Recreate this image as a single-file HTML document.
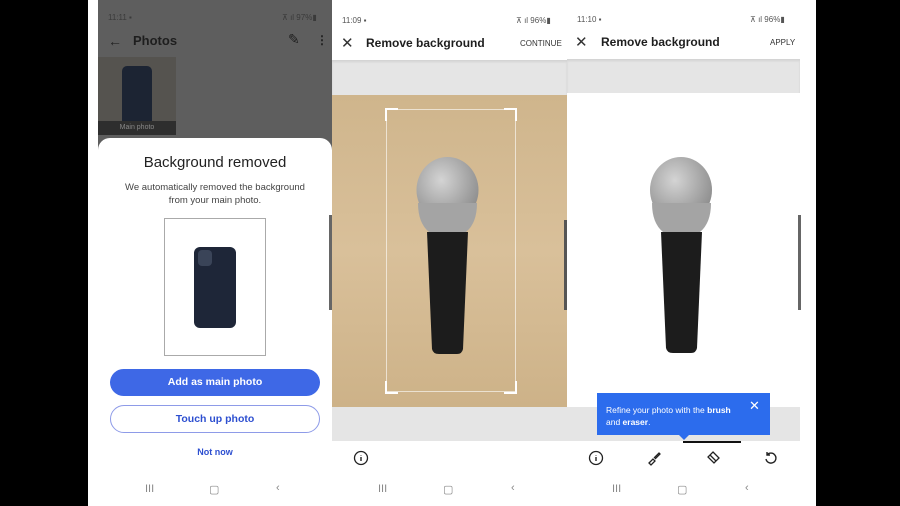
<!DOCTYPE html>
<html><head><meta charset="utf-8"><style>
*{margin:0;padding:0;box-sizing:border-box}
body{width:900px;height:506px;background:#000;position:relative;overflow:hidden;font-family:"Liberation Sans",sans-serif}
.a{position:absolute}
.st{font-size:8px;color:#555}
.nav{font-size:11px;color:#888}
</style></head><body>
<div class="a" style="left:88px;top:0;width:728px;height:506px;background:#fff"></div>

<!-- Panel 1 dimmed -->
<div class="a" style="left:98px;top:0;width:234px;height:150px;background:#5e5e5e"></div>
<div class="a st" style="left:108px;top:13px;color:#3a3a3a">11:11 ▪</div>
<div class="a st" style="left:282px;top:13px;color:#3a3a3a">⊼ ıl 97%▮</div>
<div class="a" style="left:108px;top:33px;font-size:14px;color:#222">←</div>
<div class="a" style="left:133px;top:33px;font-size:13px;font-weight:bold;color:#1e1e1e">Photos</div>
<div class="a" style="left:288px;top:31px;font-size:14px;color:#1e1e1e">✎</div>
<div class="a" style="left:316px;top:33px;font-size:12px;font-weight:bold;color:#1e1e1e">⋮</div>
<div class="a" style="left:98px;top:57px;width:78px;height:78px;background:#55534f"></div>
<div class="a" style="left:122px;top:66px;width:30px;height:62px;background:#1c2433;border-radius:5px"></div>
<div class="a" style="left:98px;top:121px;width:78px;height:14px;background:#2e2e2e;color:#888;font-size:7px;text-align:center;line-height:14px">Main photo</div>
<div class="a" style="left:98px;top:138px;width:234px;height:368px;background:#fff;border-radius:12px 12px 0 0"></div>
<div class="a" style="left:98px;top:154px;width:234px;text-align:center;font-size:15px;color:#222">Background removed</div>
<div class="a" style="left:98px;top:181px;width:234px;text-align:center;font-size:9.5px;line-height:13px;color:#444">We automatically removed the background<br>from your main photo.</div>
<div class="a" style="left:164px;top:218px;width:102px;height:138px;border:1px solid #aaa;background:#fff"></div>
<div class="a" style="left:194px;top:247px;width:42px;height:81px;background:#1e2638;border-radius:6px"></div>
<div class="a" style="left:198px;top:250px;width:14px;height:16px;background:#3a4458;border-radius:4px"></div>
<div class="a" style="left:110px;top:369px;width:210px;height:27px;background:#3e68e6;border-radius:14px;color:#fff;font-size:10.5px;font-weight:bold;text-align:center;line-height:27px">Add as main photo</div>
<div class="a" style="left:110px;top:405px;width:210px;height:28px;border:1px solid #8e9be8;border-radius:14px;color:#2d4fd0;font-size:10.5px;font-weight:bold;text-align:center;line-height:26px">Touch up photo</div>
<div class="a" style="left:98px;top:447px;width:234px;text-align:center;font-size:9px;font-weight:bold;color:#2d4fd0">Not now</div>
<div class="a nav" style="left:145px;top:483px">III</div>
<div class="a nav" style="left:209px;top:483px">▢</div>
<div class="a nav" style="left:276px;top:482px">‹</div>
<div class="a" style="left:329px;top:215px;width:3px;height:95px;background:#666"></div>

<!-- Panel 2 -->
<div class="a st" style="left:342px;top:16px">11:09 ▪</div>
<div class="a st" style="left:516px;top:16px">⊼ ıl 96%▮</div>
<div class="a" style="left:341px;top:34px;font-size:15px;color:#333">✕</div>
<div class="a" style="left:366px;top:36px;font-size:12px;font-weight:bold;color:#1e1e1e">Remove background</div>
<div class="a" style="left:520px;top:39px;font-size:8px;color:#333">CONTINUE</div>
<div class="a" style="left:332px;top:60px;width:235px;height:35px;background:#e5e5e5;box-shadow:inset 0 2px 2px rgba(0,0,0,.08)"></div>
<div class="a" style="left:332px;top:95px;width:235px;height:312px;background:linear-gradient(180deg,#cfb58c,#d9c09a 50%,#cdb288)"></div>
<div class="a" style="left:332px;top:407px;width:235px;height:34px;background:#e5e5e5"></div>
<div class="a" style="left:386px;top:109px;width:130px;height:283px;border:1px solid rgba(255,255,255,.6)"></div>
<svg class="a" style="left:332px;top:95px" width="235" height="312">
<defs><radialGradient id="g" cx="40%" cy="35%" r="70%"><stop offset="0" stop-color="#d4d4d4"/><stop offset="1" stop-color="#8a8a8a"/></radialGradient></defs>
<path d="M54 26V14H66M172 14H184V26M54 286V298H66M172 298H184V286" stroke="#fff" stroke-width="2" fill="none"/>
<path d="M95 137H136L131 254Q130 259 125 259H107Q101 259 100 254Z" fill="#1c1c1c"/>
<ellipse cx="115.5" cy="95" rx="31" ry="33" fill="url(#g)"/>
<path d="M86 108Q86 128 97 137H134Q145 128 145 108Z" fill="#a4a4a4"/>
</svg>
<svg class="a" style="left:353px;top:450px" width="16" height="16"><circle cx="8" cy="8" r="6.5" stroke="#222" stroke-width="1.3" fill="none"/><path d="M8 7v4M8 5v.5" stroke="#222" stroke-width="1.4"/></svg>
<div class="a nav" style="left:378px;top:483px">III</div>
<div class="a nav" style="left:443px;top:483px">▢</div>
<div class="a nav" style="left:511px;top:482px">‹</div>
<div class="a" style="left:564px;top:220px;width:3px;height:90px;background:#555"></div>

<!-- Panel 3 -->
<div class="a st" style="left:577px;top:15px">11:10 ▪</div>
<div class="a st" style="left:750px;top:15px">⊼ ıl 96%▮</div>
<div class="a" style="left:575px;top:33px;font-size:15px;color:#333">✕</div>
<div class="a" style="left:601px;top:35px;font-size:12px;font-weight:bold;color:#1e1e1e">Remove background</div>
<div class="a" style="left:770px;top:38px;font-size:8px;color:#333">APPLY</div>
<div class="a" style="left:567px;top:59px;width:233px;height:34px;background:#e5e5e5;box-shadow:inset 0 2px 2px rgba(0,0,0,.08)"></div>
<div class="a" style="left:567px;top:407px;width:233px;height:34px;background:#e5e5e5"></div>
<svg class="a" style="left:567px;top:93px" width="233" height="314">
<defs><radialGradient id="g2" cx="40%" cy="35%" r="70%"><stop offset="0" stop-color="#d4d4d4"/><stop offset="1" stop-color="#8a8a8a"/></radialGradient></defs>
<path d="M94 139H135L130 255Q129 260 124 260H106Q100 260 99 255Z" fill="#1c1c1c"/>
<ellipse cx="114" cy="97" rx="31" ry="33" fill="url(#g2)"/>
<path d="M85 110Q85 130 96 139H133Q144 130 144 110Z" fill="#a4a4a4"/>
</svg>
<div class="a" style="left:798px;top:215px;width:3px;height:95px;background:#666"></div>
<div class="a" style="left:597px;top:393px;width:173px;height:42px;background:#2c6ced"></div>
<div class="a" style="left:678px;top:434px;width:0;height:0;border-left:6px solid transparent;border-right:6px solid transparent;border-top:6px solid #2c6ced"></div>
<div class="a" style="left:606px;top:404px;font-size:8.5px;line-height:12px;color:#fff">Refine your photo with the <b>brush</b><br>and <b>eraser</b>.</div>
<div class="a" style="left:749px;top:398px;font-size:13px;color:#fff">✕</div>
<div class="a" style="left:683px;top:441px;width:58px;height:2px;background:#111"></div>
<svg class="a" style="left:588px;top:450px" width="16" height="16"><circle cx="8" cy="8" r="6.5" stroke="#222" stroke-width="1.3" fill="none"/><path d="M8 7v4M8 5v.5" stroke="#222" stroke-width="1.4"/></svg>
<svg class="a" style="left:646px;top:450px" width="16" height="16"><path d="M3 13l4-4 2 2-4 4zM8 8l5-5 1 1-5 5" stroke="#222" stroke-width="1.3" fill="none"/></svg>
<svg class="a" style="left:705px;top:450px" width="16" height="16"><path d="M8 2l6 6-5 5-6-6zM5 5l6 6" stroke="#222" stroke-width="1.3" fill="none"/></svg>
<svg class="a" style="left:763px;top:450px" width="16" height="16"><path d="M4 5a5 5 0 1 1-1 4M4 2v3h3" stroke="#222" stroke-width="1.4" fill="none"/></svg>
<div class="a nav" style="left:612px;top:483px">III</div>
<div class="a nav" style="left:677px;top:483px">▢</div>
<div class="a nav" style="left:745px;top:482px">‹</div>
</body></html>
